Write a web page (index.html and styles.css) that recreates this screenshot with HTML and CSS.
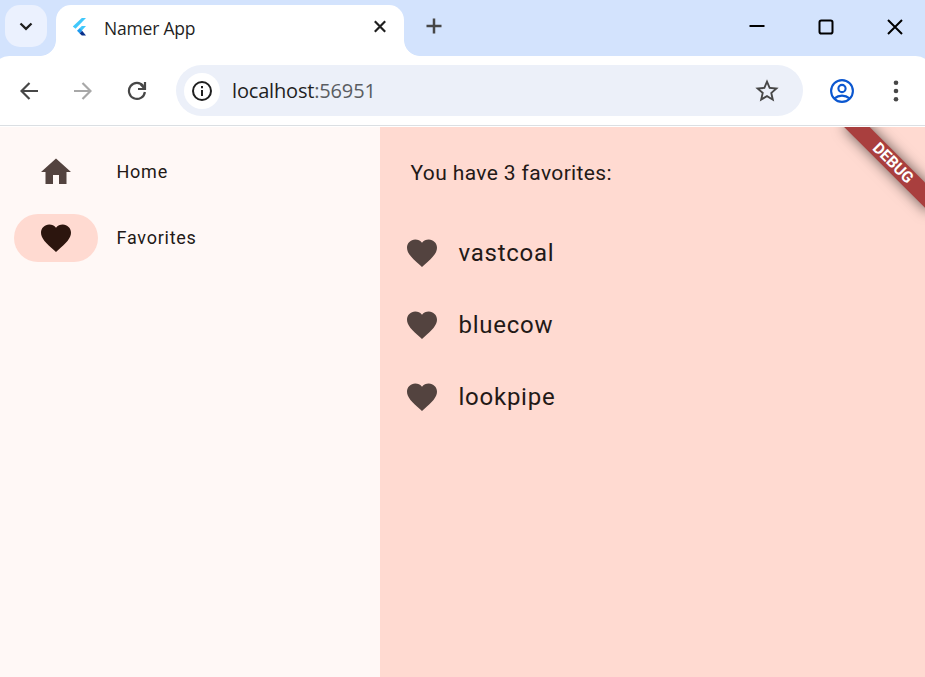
FILE: index.html
```html
<!DOCTYPE html>
<html lang="en">
<head>
<meta charset="utf-8">
<title>Namer App</title>
<link rel="stylesheet" href="styles.css">
</head>
<body>
<div class="window">
  <header class="tabstrip">
    <button class="tab-search" aria-label="Search tabs"><svg width="42" height="42" viewBox="0 0 42 42"><path d="M15.500 18.500l5.500 5.300 5.500-5.300" fill="none" stroke="#1f1f1f" stroke-width="2.300"/></svg></button>
    <div class="tab">
      <svg class="flutter" width="16" height="20" viewBox="0 0 16 20"><path d="M9.800 1H14L3.500 11.700.8 9.600z" fill="#41c8fb"/><path d="M9.800 9H14l-4.400 4.700-2.300-2.300z" fill="#41c8fb"/><path d="M7.500 16.200l2.600-2.500 3.900 4.800H9.800z" fill="#08308c"/><path d="M5 13.700l2.600-2.500 2.500 2.500-2.600 2.500z" fill="#1e9bf0"/></svg>
      <span class="tab-title">Namer App</span>
      <svg class="tab-close" width="14" height="14" viewBox="0 0 14 14"><path d="M1.800 1.300l10.400 10.400M12.200 1.300L1.800 11.700" stroke="#1f1f1f" stroke-width="2.200"/></svg>
    </div>
    <svg class="new-tab" width="16" height="16" viewBox="0 0 16 16"><path d="M8 .5v15M.5 8h15" stroke="#474747" stroke-width="2.500"/></svg>
    <div class="controls">
      <svg width="16" height="16" viewBox="0 0 16 16"><path d="M.5 7h15" stroke="#000" stroke-width="2"/></svg>
      <svg width="16" height="16" viewBox="0 0 16 16"><rect x="1.500" y="1.500" width="13" height="13" rx="1.800" fill="none" stroke="#000" stroke-width="2"/></svg>
      <svg width="16" height="16" viewBox="0 0 16 16"><path d="M1 1l14 14M15 1L1 15" stroke="#000" stroke-width="2"/></svg>
    </div>
  </header>
  <nav class="toolbar">
    <svg class="back" width="18" height="18" viewBox="0 0 18 18"><path d="M18 9H1.500M9.500 1L1.500 9l8 8" fill="none" stroke="#474747" stroke-width="2.200"/></svg>
    <svg class="forward" width="18" height="18" viewBox="0 0 18 18"><path d="M0 9h16.500M8.500 1l8 8-8 8" fill="none" stroke="#a8a8a8" stroke-width="2.200"/></svg>
    <svg class="reload" width="20" height="20" viewBox="0 0 20 20"><path d="M17.900 11a8 8 0 1 1-1.600-6" fill="none" stroke="#474747" stroke-width="2.200"/><path d="M18 1v7h-7M17 7l-3.500-4" fill="none" stroke="#474747" stroke-width="2.200"/></svg>
    <div class="omnibox">
      <span class="info"><svg width="22" height="22" viewBox="0 0 22 22"><circle cx="11" cy="11" r="9" fill="none" stroke="#1f1f1f" stroke-width="2"/><path d="M11 10v6M11 6v2.200" stroke="#1f1f1f" stroke-width="2"/></svg></span>
      <span class="url">localhost<span class="port">:56951</span></span>
      <svg class="star" width="28" height="28" viewBox="0 0 24 24"><path fill="#474747" d="M22 9.240l-7.190-.62L12 2 9.190 8.630 2 9.240l5.460 4.730L5.820 21 12 17.270 18.180 21l-1.630-7.030L22 9.240zM12 15.400l-3.760 2.270 1-4.280-3.320-2.880 4.380-.38L12 6.100l1.710 4.040 4.380.38-3.320 2.880 1 4.280L12 15.400z"/></svg>
    </div>
    <svg class="profile" width="24" height="24" viewBox="0 0 24 24"><g fill="none" stroke="#0b57d0" stroke-width="2.100"><circle cx="12" cy="12" r="10.900"/><circle cx="12" cy="9.500" r="3.600"/><path d="M4.500 19.400c4.200-3.700 10.800-3.700 15 0"/></g></svg>
    <svg class="more" width="6" height="22" viewBox="0 0 6 22"><g fill="#474747"><circle cx="3" cy="2.700" r="2.300"/><circle cx="3" cy="11" r="2.300"/><circle cx="3" cy="19.300" r="2.300"/></g></svg>
  </nav>
  <main class="app">
    <aside class="rail">
      <div class="destination"><span class="indicator"><svg class="icon" viewBox="0 0 24 24"><path d="M10 20v-6h4v6h5v-8h3L12 3 2 12h3v8z"/></svg></span><span class="label">Home</span></div>
      <div class="destination selected"><span class="indicator"><svg class="icon" viewBox="0 0 24 24"><path d="M12 21.350l-1.450-1.320C5.400 15.360 2 12.280 2 8.500 2 5.420 4.420 3 7.500 3c1.740 0 3.410.81 4.500 2.090C13.090 3.810 14.760 3 16.500 3 19.580 3 22 5.420 22 8.500c0 3.780-3.400 6.860-8.550 11.540L12 21.350z"/></svg></span><span class="label">Favorites</span></div>
    </aside>
    <section class="content">
      <p class="heading">You have 3 favorites:</p>
      <ul class="favorites">
        <li><svg class="icon" viewBox="0 0 24 24"><path d="M12 21.350l-1.450-1.320C5.400 15.360 2 12.280 2 8.500 2 5.420 4.420 3 7.500 3c1.740 0 3.410.81 4.500 2.090C13.090 3.810 14.760 3 16.500 3 19.580 3 22 5.420 22 8.500c0 3.780-3.400 6.860-8.550 11.540L12 21.350z"/></svg><span>vastcoal</span></li>
        <li><svg class="icon" viewBox="0 0 24 24"><path d="M12 21.350l-1.450-1.320C5.400 15.360 2 12.280 2 8.500 2 5.420 4.420 3 7.500 3c1.740 0 3.410.81 4.500 2.090C13.090 3.810 14.760 3 16.500 3 19.580 3 22 5.420 22 8.500c0 3.780-3.400 6.860-8.550 11.540L12 21.350z"/></svg><span>bluecow</span></li>
        <li><svg class="icon" viewBox="0 0 24 24"><path d="M12 21.350l-1.450-1.320C5.400 15.360 2 12.280 2 8.500 2 5.420 4.420 3 7.500 3c1.740 0 3.410.81 4.500 2.090C13.090 3.810 14.760 3 16.500 3 19.580 3 22 5.420 22 8.500c0 3.780-3.400 6.860-8.550 11.540L12 21.350z"/></svg><span>lookpipe</span></li>
      </ul>
    </section>
    <div class="banner">DEBUG</div>
  </main>
</div>
</body>
</html>
```
FILE: styles.css
```css
* { box-sizing: border-box; }
body { margin: 0; overflow: hidden; }
svg { display: block; flex: none; }
.window {
  width: 925px;
  height: 677px;
  display: flex;
  flex-direction: column;
  overflow: hidden;
  background: #d3e3fd;
  font-family: "Open Sans", "Noto Sans", sans-serif;
}
.tabstrip { height: 56px; flex: none; display: flex; padding: 5px 22.500px 0 5px; }
.tab-search {
  width: 42px;
  height: 42px;
  padding: 0;
  border: 0;
  border-radius: 15px;
  background: #ebf1fe;
}
.tab {
  position: relative;
  width: 348px;
  margin-left: 9px;
  padding: 0 17px 8px 16px;
  display: flex;
  align-items: center;
  background: #fff;
  border-radius: 15px 15px 0 0;
}
.tab::before, .tab::after {
  content: "";
  position: absolute;
  bottom: 0;
  width: 16px;
  height: 16px;
}
.tab::before { left: -16px; background: radial-gradient(circle at 0 0, transparent 15.500px, #fff 16.300px); }
.tab::after { right: -16px; background: radial-gradient(circle at 100% 0, transparent 15.500px, #fff 16.300px); }
.tab-title { margin-left: 16px; font-size: 17.500px; line-height: 24px; letter-spacing: -.2px; color: #1f1f1f; white-space: nowrap; padding-top: 2px; }
.tab-close { margin-left: auto; }
.new-tab { margin: 13px 0 0 22px; }
.controls { display: flex; gap: 53px; margin: 14px 0 0 auto; }
.toolbar {
  height: 71px;
  flex: none;
  display: flex;
  align-items: center;
  margin: 0 -7px;
  padding: 0 7px 1px 27px;
  border-radius: 16px 16px 0 0;
  background: linear-gradient(#dbdfe3, #dbdfe3) 0 69px / 100% 1px no-repeat #fff;
}
.forward { margin-left: 36px; }
.reload { margin-left: 35px; }
.omnibox {
  width: 627px;
  height: 51px;
  margin: 0 0 1px 29px;
  padding: 0 22px 0 8px;
  display: flex;
  align-items: center;
  border-radius: 26px;
  background: #ecf0f9;
}
.info { width: 36px; height: 36px; border-radius: 50%; background: #fff; display: grid; place-items: center; }
.url { margin-left: 12px; font-size: 20px; line-height: 27px; letter-spacing: -.17px; color: #1f1f1f; }
.port { color: #5a5d62; }
.star { margin-left: auto; }
.profile { margin-left: 27px; overflow: visible; }
.more { margin-left: 39px; }
.app { position: relative; flex: 1; display: flex; overflow: hidden; font-family: Roboto, sans-serif; color: #231917; }
.rail { width: 380px; padding: 21px 14px; background: #fff8f6; display: flex; flex-direction: column; gap: 18px; }
.destination { display: flex; align-items: center; height: 48px; gap: 18.500px; font-size: 18px; letter-spacing: .75px; }
.label { line-height: 20px; padding-bottom: 1px; }
.indicator { width: 84px; height: 48px; border-radius: 24px; display: grid; place-items: center; }
.icon { width: 36px; height: 36px; fill: #53433f; }
.selected .indicator { background: #ffdad1; }
.selected .icon { fill: #2c150e; }
.content { flex: 1; background: #ffdad1; }
.heading { margin: 30px 0 0 30.500px; font-size: 21px; line-height: 32px; letter-spacing: .375px; }
.favorites { list-style: none; margin: 28px 0 0; padding: 0 0 0 24px; }
.favorites li { height: 72px; display: flex; align-items: center; gap: 18.500px; font-size: 24px; letter-spacing: .75px; }
.banner {
  position: absolute;
  left: 869px;
  top: 42px;
  width: 120px;
  height: 18px;
  transform: rotate(45deg);
  transform-origin: 60px -42px;
  background: #a93f3e;
  box-shadow: 0 0 14px rgba(0, 0, 0, .6);
  color: #fff;
  font-size: 15.700px;
  font-weight: 700;
  line-height: 18px;
  text-align: center;
}
```
